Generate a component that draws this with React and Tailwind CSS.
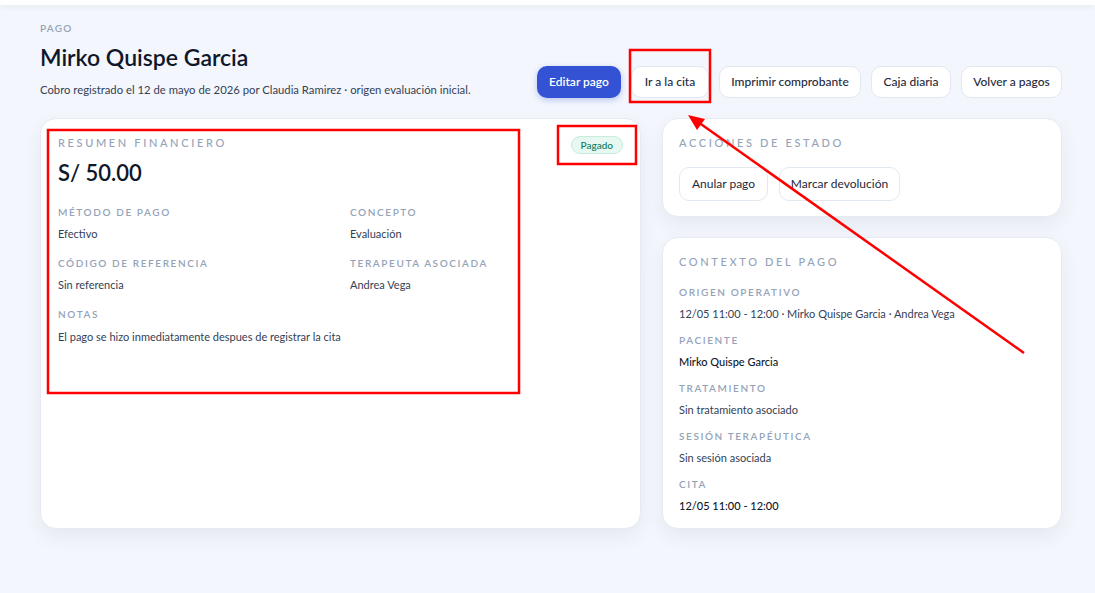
import React from 'react';

const Label = ({ children, className = '' }) => (
  <div className={`text-[10px] leading-[14px] font-semibold uppercase tracking-[0.16em] text-[#94a3b8] ${className}`}>
    {children}
  </div>
);

const SectionTitle = ({ children }) => (
  <div className="text-[11px] leading-4 font-medium uppercase tracking-[0.24em] text-[#94a3b8]">{children}</div>
);

const Field = ({ label, value, strong }) => (
  <div>
    <Label>{label}</Label>
    <div
      className={`mt-[7px] text-[11px] leading-4 ${strong ? 'text-[#0f172a] font-medium' : 'text-[#334155]'}`}
    >
      {value}
    </div>
  </div>
);

const OutlineButton = ({ children, className = '' }) => (
  <button
    className={`h-8 rounded-[10px] border border-[#e2e8f0] bg-white text-[12px] font-medium text-[#1e293b] ${className}`}
  >
    {children}
  </button>
);

// red review marks drawn over the page
const Annotations = () => (
  <svg className="absolute inset-0 pointer-events-none" width="1095" height="593">
    <rect x="630" y="50" width="80" height="52" fill="none" stroke="#ff0000" strokeWidth="2.5" />
    <rect x="48" y="130" width="471" height="263" fill="none" stroke="#ff0000" strokeWidth="2.5" />
    <rect x="558" y="126" width="78" height="38" fill="none" stroke="#ff0000" strokeWidth="2.5" />
    <line x1="1024" y1="353" x2="698" y2="122" stroke="#ff0000" strokeWidth="2.5" />
    <polygon points="688,115 705,119 697,130" fill="#ff0000" />
  </svg>
);

const App = () => {
  return (
    <div className="relative h-[593px] overflow-hidden bg-[#f3f6fc]" style={{ fontFamily: 'Lato, sans-serif' }}>
      <div className="h-[5px] bg-white shadow-[0_2px_6px_rgba(15,23,42,0.05)]" />

      <div className="pl-10 pr-[33px] pt-4">
        {/* Header */}
        <div className="flex items-end justify-between">
          <div>
            <div className="text-[10px] leading-[14px] font-semibold uppercase tracking-[0.12em] text-[#94a3b8]">Pago</div>
            <h1 className="mt-[6px] text-[23px] leading-8 font-semibold text-[#0f172a]">Mirko Quispe Garcia</h1>
            <p className="mt-[9px] text-[11.3px] leading-4 text-[#334155]">
              Cobro registrado el 12 de mayo de 2026 por Claudia Ramirez · origen evaluación inicial.
            </p>
          </div>
          <div className="flex items-center gap-[10px]">
            <button className="h-8 w-[84px] rounded-[10px] bg-[#3352d4] text-[12px] font-semibold text-white shadow-[0_2px_6px_rgba(51,82,212,0.3)]">
              Editar pago
            </button>
            <OutlineButton className="w-[78px]">Ir a la cita</OutlineButton>
            <OutlineButton className="w-[142px]">Imprimir comprobante</OutlineButton>
            <OutlineButton className="w-[80px]">Caja diaria</OutlineButton>
            <OutlineButton className="w-[101px]">Volver a pagos</OutlineButton>
          </div>
        </div>

        {/* Content */}
        <div className="mt-[20px] grid grid-cols-[601px_1fr] gap-[21px]">
          <div className="rounded-2xl border border-[#e6ebf3] bg-white px-[17px] pt-4 shadow-[0_8px_20px_rgba(15,23,42,0.06)]">
            <div className="flex items-start justify-between">
              <div>
                <SectionTitle>Resumen financiero</SectionTitle>
                <div className="mt-2 text-[22px] leading-7 font-semibold text-[#0f172a]">S/ 50.00</div>
              </div>
              <span className="mt-[1px] rounded-full border border-[#c6eddb] bg-[#e7f8f0] px-[9px] text-[10px] leading-[16px] font-medium text-[#0f7a5a]">
                Pagado
              </span>
            </div>

            <div className="mt-[18px] grid grid-cols-[292px_1fr] gap-y-[14px]">
              <Field label="Método de pago" value="Efectivo" />
              <Field label="Concepto" value="Evaluación" />
              <Field label="Código de referencia" value="Sin referencia" />
              <Field label="Terapeuta asociada" value="Andrea Vega" />
              <div className="col-span-2">
                <Label>Notas</Label>
                <div className="mt-2 text-[11px] leading-4 text-[#334155]">
                  El pago se hizo inmediatamente despues de registrar la cita
                </div>
              </div>
            </div>
          </div>

          <div className="flex flex-col gap-[20px]">
            <div className="rounded-2xl border border-[#e6ebf3] bg-white px-4 pt-4 pb-[15px] shadow-[0_8px_20px_rgba(15,23,42,0.06)]">
              <SectionTitle>Acciones de estado</SectionTitle>
              <div className="mt-4 flex gap-[11px]">
                <button className="h-[34px] w-[89px] rounded-[10px] border border-[#e2e8f0] bg-white text-[12px] text-[#1e293b]">
                  Anular pago
                </button>
                <button className="h-[34px] w-[121px] rounded-[10px] border border-[#e2e8f0] bg-white text-[12px] text-[#1e293b]">
                  Marcar devolución
                </button>
              </div>
            </div>

            <div className="rounded-2xl border border-[#e6ebf3] bg-white px-4 pt-4 pb-[14px] shadow-[0_8px_20px_rgba(15,23,42,0.06)]">
              <SectionTitle>Contexto del pago</SectionTitle>
              <div className="mt-[15px] flex flex-col gap-[11px]">
                <Field label="Origen operativo" value="12/05 11:00 - 12:00 · Mirko Quispe Garcia · Andrea Vega" />
                <Field label="Paciente" value="Mirko Quispe Garcia" strong />
                <Field label="Tratamiento" value="Sin tratamiento asociado" />
                <Field label="Sesión terapéutica" value="Sin sesión asociada" />
                <Field label="Cita" value="12/05 11:00 - 12:00" strong />
              </div>
            </div>
          </div>
        </div>
      </div>

      <Annotations />
    </div>
  );
};

export default App;
